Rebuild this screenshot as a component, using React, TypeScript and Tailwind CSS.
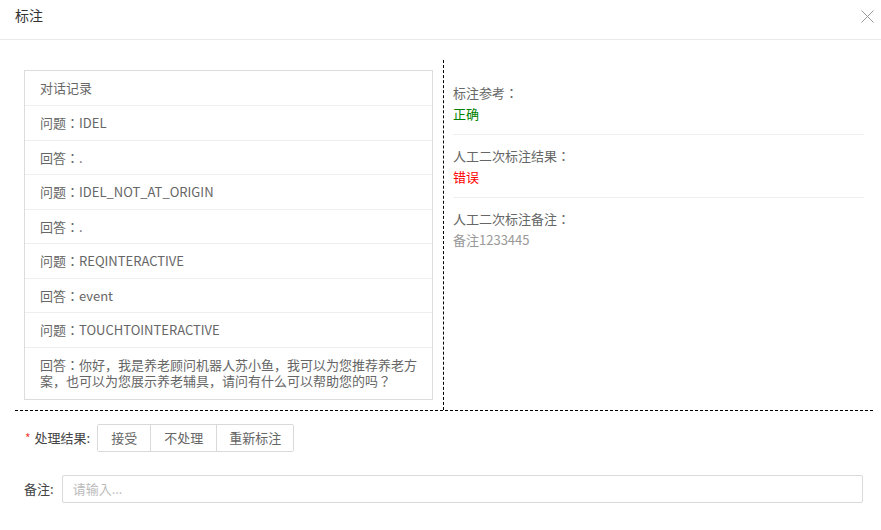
const records = [
  '问题：IDEL',
  '回答：.',
  '问题：IDEL_NOT_AT_ORIGIN',
  '回答：.',
  '问题：REQINTERACTIVE',
  '回答：event',
  '问题：TOUCHTOINTERACTIVE',
];

const App = () => {
  return (
    <div className="w-[881px] h-[530px] bg-white font-['Microsoft_YaHei','Noto_Sans_CJK_JP',sans-serif] text-[13px]">
      <div className="h-[40px] flex items-center justify-between pl-[15px] pr-[7px] border-b border-[#e9e9e9]">
        <span className="text-[14px] text-[#333] leading-[20px] -mt-[9px]">标注</span>
        <svg width="13" height="13" viewBox="0 0 13 13" className="-mt-[7px]">
          <path d="M0.5 0.5 L12.5 12.5 M12.5 0.5 L0.5 12.5" stroke="#999" strokeWidth="1" fill="none" />
        </svg>
      </div>

      <div className="pt-[20px]">
        <div className="ml-[15px] mr-[8px] flex border-b border-dashed border-black">
          <div className="w-[429px] shrink-0 border-r border-dashed border-black pl-[9px] pt-[10px] pb-[10px]">
            <div className="w-[409px] border border-[#dcdcdc] text-[#666]">
              <div className="px-[15px] h-[35px] flex items-center border-b border-[#eee]">对话记录</div>
              {records.map((r, i) => (
                <div key={i} className="px-[15px] py-[8px] leading-[17.5px] border-b border-[#eee]">{r}</div>
              ))}
              <div className="px-[15px] py-[9px] leading-[16.5px]">
                回答：你好，我是养老顾问机器人苏小鱼，我可以为您推荐养老方案，也可以为您展示养老辅具，请问有什么可以帮助您的吗？
              </div>
            </div>
          </div>

          <div className="flex-1 pl-[9px] pr-[9px] pt-[12px] leading-[21px]">
            <div className="py-[10px] border-b border-[#eee]">
              <div className="text-[#666]">标注参考：</div>
              <div className="text-[#008000]">正确</div>
            </div>
            <div className="py-[10px] border-b border-[#eee]">
              <div className="text-[#666]">人工二次标注结果：</div>
              <div className="text-[#ff0000]">错误</div>
            </div>
            <div className="py-[10px]">
              <div className="text-[#666]">人工二次标注备注：</div>
              <div className="text-[#999]">备注1233445</div>
            </div>
          </div>
        </div>

        <div className="mt-[13px] pl-[25px] flex items-center">
          <span className="text-[#f04134] mr-[4px] text-[12px]">*</span>
          <span className="text-[#444]">处理结果:</span>
          <div className="ml-[7px] flex h-[28px] border border-[#d9d9d9] rounded-[2px] text-[#666]">
            <button className="px-[13px] leading-[26px] bg-white">接受</button>
            <button className="px-[13px] leading-[26px] bg-white border-l border-[#d9d9d9]">不处理</button>
            <button className="px-[12px] leading-[26px] bg-white border-l border-[#d9d9d9]">重新标注</button>
          </div>
        </div>

        <div className="mt-[23px] pl-[24px] pr-[18px] flex items-center">
          <span className="text-[#444]">备注:</span>
          <input
            className="ml-[8px] flex-1 h-[28px] border border-[#d9d9d9] rounded-[2px] px-[10px] text-[13px] outline-none placeholder:text-[#bbb]"
            placeholder="请输入..."
          />
        </div>
      </div>
    </div>
  );
};

export default App;
